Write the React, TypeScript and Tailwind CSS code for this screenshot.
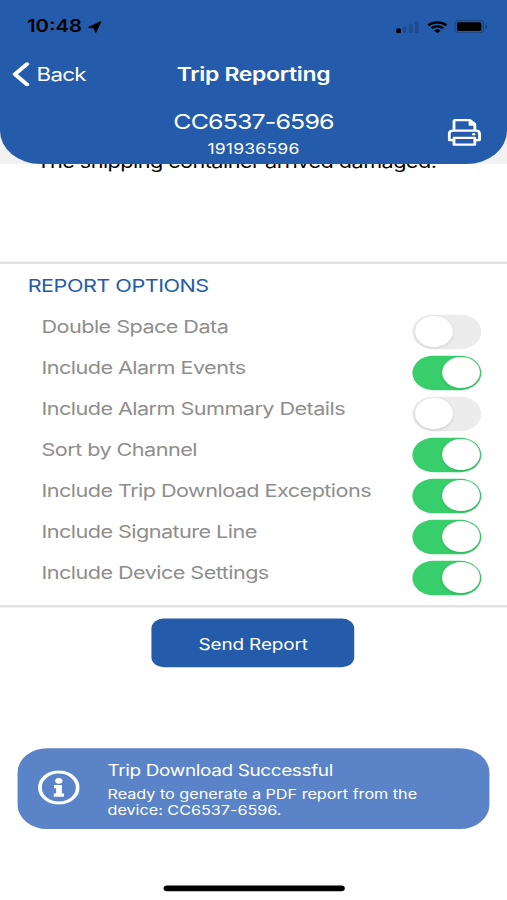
import React, { useState } from 'react';

type ReportOption = {
  label: string;
  enabled: boolean;
};

const reportOptions: ReportOption[] = [
  { label: 'Double Space Data', enabled: false },
  { label: 'Include Alarm Events', enabled: true },
  { label: 'Include Alarm Summary Details', enabled: false },
  { label: 'Sort by Channel', enabled: true },
  { label: 'Include Trip Download Exceptions', enabled: true },
  { label: 'Include Signature Line', enabled: true },
  { label: 'Include Device Settings', enabled: true },
];

const LocationIcon = () => (
  <svg className="ml-[4px] h-[11px] w-[10px]" viewBox="0 0 10 11" fill="currentColor" stroke="currentColor" strokeWidth="0.8" strokeLinejoin="round">
    <path d="M9.5.6 5.8 10.1 4.7 6.4.5 5.8Z" />
  </svg>
);

const SignalIcon = () => (
  <svg className="h-[11px] w-[17px]" viewBox="0 0 17 11" fill="currentColor">
    <rect x="0" y="6.8" width="3.6" height="4.2" rx="1.2" />
    <g opacity="0.16">
      <rect x="5" y="5" width="2.6" height="5.8" rx="0.8" />
      <rect x="9.5" y="2.8" width="2.6" height="8" rx="0.8" />
      <rect x="14" y="0.4" width="2.6" height="10.4" rx="0.8" />
    </g>
  </svg>
);

const WifiIcon = () => (
  <svg className="h-[11px] w-[15px]" viewBox="0 0 15 11" fill="none" stroke="currentColor">
    <path strokeWidth="2" d="M.8 3.9a9.6 9.6 0 0 1 13.4 0" />
    <path strokeWidth="2" d="M3.2 6.5a6.2 6.2 0 0 1 8.6 0" />
    <path fill="currentColor" stroke="none" d="M7.5 11 5.1 8.5a3.5 3.5 0 0 1 4.8 0Z" />
  </svg>
);

const BatteryIcon = () => (
  <svg className="h-[12px] w-[25px]" viewBox="0 0 25 12" fill="currentColor">
    <rect x="0.5" y="0.5" width="21" height="11" rx="2.8" fill="none" stroke="currentColor" opacity="0.25" />
    <rect x="2" y="2" width="18" height="8" rx="1.2" />
    <path opacity="0.35" d="M23 4v4c.9-.4 1.4-1.1 1.4-2S23.9 4.4 23 4Z" />
  </svg>
);

const PrinterIcon = () => (
  <svg className="h-[25px] w-[25px]" viewBox="0 0 25 25" fill="none" stroke="currentColor" strokeWidth="2.1" strokeLinejoin="round">
    <path d="M4.8 11V2.3q0-1 1-1h10.7L20.2 5v6" />
    <path fill="currentColor" stroke="none" d="M15.6 1h1.500l3.700 3.800v1.700h-5.200Z" />
    <path d="M4.600 19.400H1.300v-5.800q0-2.800 2.800-2.800h16.800q2.800 0 2.800 2.800v5.800h-3.300" />
    <path d="M4.800 17.400h15.400v6.100H4.800Z" />
    <circle cx="19.400" cy="14.100" r="1.200" fill="currentColor" stroke="none" />
  </svg>
);

const InfoIcon = () => (
  <svg className="h-[31px] w-[31px]" viewBox="0 0 31 31" fill="none">
    <circle cx="15.5" cy="15.5" r="14" stroke="currentColor" strokeWidth="2.8" />
    <circle cx="15.5" cy="9.5" r="2.7" fill="currentColor" />
    <path fill="currentColor" d="M11.9 13.3h5.900v7.700h1.500v2.800h-7.500V21h1.700v-4.900h-1.600Z" />
  </svg>
);

const StatusBar = () => (
  <div className="flex h-11 items-center justify-between pl-[20px] pr-[14px] pt-[4px] text-black">
    <div className="flex items-center">
      <span className="pt-px text-[15px] font-semibold">10:48</span>
      <LocationIcon />
    </div>
    <div className="flex items-center gap-[5.5px]">
      <SignalIcon />
      <WifiIcon />
      <BatteryIcon />
    </div>
  </div>
);

const Header = () => (
  <header className="h-[148.4px] rounded-b-[30px] bg-[#255bab] text-white">
    <StatusBar />
    <div className="grid h-11 grid-cols-[1fr_auto_1fr] items-center pt-[2px]">
      <button className="flex items-center gap-[5px] pl-[9px]">
        <svg className="h-[22px] w-[13px]" viewBox="0 0 13 22" fill="none" stroke="currentColor" strokeWidth="3.2" strokeLinecap="round" strokeLinejoin="round">
          <path d="M11 1.8 2 11l9 9.2" />
        </svg>
        <span className="pt-px text-[16.5px] tracking-[-0.5px]">Back</span>
      </button>
      <h1 className="pt-px text-[17px] font-semibold tracking-[-0.25px]">Trip Reporting</h1>
    </div>
    <div className="grid grid-cols-[1fr_auto_1fr] items-center pt-[9px]">
      <div className="col-start-2 text-center">
        <p className="text-[18.5px] leading-[25px] tracking-[-0.65px]">CC6537-6596</p>
        <p className="mt-[4px] text-[13px] leading-[16px] tracking-[0.15px]">191936596</p>
      </div>
      <button className="justify-self-end pr-[19px]" aria-label="Print">
        <PrinterIcon />
      </button>
    </div>
  </header>
);

const Toggle = ({ label, initial }: { label: string; initial: boolean }) => {
  const [on, setOn] = useState(initial);

  return (
    <button
      role="switch"
      aria-checked={on}
      aria-label={label}
      onClick={() => setOn(!on)}
      className={`flex h-[31px] w-[51px] items-center rounded-full px-[1.5px] ${on ? 'justify-end bg-[#38ce6b]' : 'justify-start bg-[#ececec]'}`}
    >
      <span className="h-[28px] w-[28px] rounded-full bg-white shadow-[0_1px_3px_rgba(0,0,0,0.12)]" />
    </button>
  );
};

// Laid out in 375x812 points and stretched to fill the window.
const App: React.FC = () => {
  return (
    <div className="h-[900px] w-[507px] overflow-hidden bg-white">
      <div className="flex h-[812px] w-[375px] origin-top-left scale-x-[1.352] scale-y-[1.1084] flex-col bg-white font-['Inter',sans-serif]">
        <div className="relative z-10 bg-[#f2f2f2]">
          <Header />
        </div>

        <div className="-mt-[13.4px] h-[101.4px] pl-[27px]">
          <p className="text-[16px] leading-[22px] tracking-[-0.4px] whitespace-nowrap text-black">The shipping container arrived damaged.</p>
        </div>

        <section className="h-[311.6px] border-y-2 border-[#e0e0e0] pt-[6.5px]">
          <h2 className="pl-[20.5px] text-[16px] leading-[24px] tracking-[-0.38px] text-[#255bab]">REPORT OPTIONS</h2>
          <div className="pt-[15px]">
            {reportOptions.map((option) => (
              <div key={option.label} className="flex h-[37px] items-start justify-between pl-[30.7px] pr-[19px]">
                <span className="text-[16px] leading-[21px] tracking-[-0.41px] whitespace-nowrap text-[#8e8e8e]">{option.label}</span>
                <Toggle label={option.label} initial={option.enabled} />
              </div>
            ))}
          </div>
        </section>

        <div className="flex h-[127px] items-start justify-center pt-[10px] pr-[0.5px]">
          <button className="h-[44px] w-[150px] rounded-[9px] bg-[#255bab] pt-px text-[14px] tracking-[-0.1px] text-white">Send Report</button>
        </div>

        <div className="mr-[13.5px] ml-[12.5px] flex h-[73.5px] shrink-0 rounded-[22px] bg-[#5a83c8] text-white">
          <div className="w-[67px] pl-[15.5px] pt-[20.5px]">
            <InfoIcon />
          </div>
          <div className="pt-[10px]">
            <p className="text-[14px] leading-[20px] tracking-[-0.26px]">Trip Download Successful</p>
            <p className="mt-[5px] text-[12px] leading-[14.4px] tracking-[-0.02px] whitespace-nowrap">
              Ready to generate a PDF report from the
              <br />
              device: CC6537-6596.
            </p>
          </div>
        </div>

        <div className="mt-auto mb-[8px] h-[5px] w-[134px] self-center rounded-full bg-black" />
      </div>
    </div>
  );
};

export default App;
